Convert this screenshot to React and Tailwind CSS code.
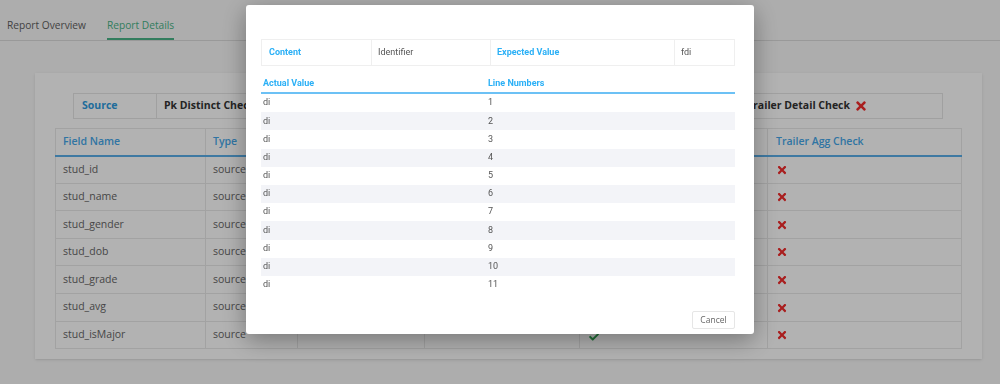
import { FaTimes, FaCheck } from 'react-icons/fa';

const fields = ['stud_id', 'stud_name', 'stud_gender', 'stud_dob', 'stud_grade', 'stud_avg', 'stud_isMajor'];

const summary = [
  { label: 'Pk Distinct Check', ok: true },
  { label: 'Pk Null Check', ok: true },
  { label: 'Header Check', ok: true },
];

const lines = Array.from({ length: 11 }, (_, i) => ({ value: 'di', line: i + 1 }));

const Mark = ({ ok, big }) =>
  ok ? (
    <FaCheck className="inline h-[10px] w-[10px] text-[#2e9e4f]" />
  ) : (
    <FaTimes className={big ? 'inline h-[14px] w-[14px] text-[#f22c2c]' : 'inline h-[12px] w-[12px] text-[#f22c2c]'} />
  );

const App = () => {
  return (
    <div className="min-h-screen bg-[#f8f8f8] font-['Open_Sans',sans-serif]">
      {/* Tabs */}
      <div className="flex h-[41px] items-end border-b border-[#dcdcdc] px-[7px] text-[10.2px]">
        <div className="pb-[7px] text-[#5f5f5f]">Report Overview</div>
        <div className="ml-[21px] border-b-2 border-[#49b487] pb-[5px] text-[#49b487]">Report Details</div>
      </div>

      {/* Card */}
      <div className="ml-[35px] mr-[18px] mt-[32px] bg-white px-[20px] pt-[20px] pb-[10px] shadow-sm">
        <div className="ml-[18px] mr-[19px] flex h-[26px] border border-[#e6e6e6] text-[10.5px] font-bold text-[#333]">
          <div className="flex w-[83px] items-center border-r border-[#e6e6e6] pl-[8px] text-[#2e9bde]">Source</div>
          {summary.map((s) => (
            <div key={s.label} className="flex w-[194px] items-center gap-1 border-r border-[#e6e6e6] pl-[7px]">
              {s.label} <Mark ok={s.ok} />
            </div>
          ))}
          <div className="flex flex-1 items-center gap-1 pl-[8px]">
            Trailer Detail Check <Mark ok={false} big />
          </div>
        </div>

        <table className="mt-[9px] w-[907px] table-fixed border-collapse border border-[#e8e8e8] text-[10.5px]">
          <thead>
            <tr className="h-[27px] border-b-2 border-[#5aaee8] text-left text-[#45a7ea]">
              <th className="w-[150px] border-r border-[#e8e8e8] pl-[7px] font-semibold">Field Name</th>
              <th className="w-[92px] border-r border-[#e8e8e8] pl-[7px] font-semibold">Type</th>
              <th className="w-[127px] border-r border-[#e8e8e8] pl-[7px] font-semibold">Data Type</th>
              <th className="w-[155px] border-r border-[#e8e8e8] pl-[7px] font-semibold">Null Check</th>
              <th className="w-[188px] border-r border-[#e8e8e8] pl-[7px] font-semibold">Length Check</th>
              <th className="pl-[8px] font-semibold">Trailer Agg Check</th>
            </tr>
          </thead>
          <tbody className="text-[#666]">
            {fields.map((f) => (
              <tr key={f} className="h-[27.6px] border-b border-[#e8e8e8]">
                <td className="border-r border-[#e8e8e8] pl-[7px]">{f}</td>
                <td className="border-r border-[#e8e8e8] pl-[7px]">source</td>
                <td className="border-r border-[#e8e8e8] pl-[7px]"></td>
                <td className="border-r border-[#e8e8e8] pl-[7px]"></td>
                <td className="border-r border-[#e8e8e8] pl-[9px] pt-[4px]"><Mark ok /></td>
                <td className="pl-[8px]"><Mark ok={false} /></td>
              </tr>
            ))}
          </tbody>
        </table>
      </div>

      {/* Modal */}
      <div className="fixed inset-0 flex justify-center bg-black/30">
        <div className="mt-[5px] h-[329px] w-[508px] rounded-[3px] bg-white pl-[15px] pr-[19px] pt-[34px] shadow-[0_6px_24px_rgba(0,0,0,0.35)] font-['Roboto',sans-serif] text-[9px]">
          <div className="flex h-[27px] border border-[#efefef] text-[#555]">
            <div className="flex w-[110px] items-center border-r border-[#efefef] pl-[7px] font-bold text-[#2bb0f6]">Content</div>
            <div className="flex w-[119px] items-center border-r border-[#efefef] pl-[6px]">Identifier</div>
            <div className="flex w-[184px] items-center border-r border-[#efefef] pl-[6px] font-bold text-[#2bb0f6]">Expected Value</div>
            <div className="flex flex-1 items-center pl-[6px]">fdi</div>
          </div>

          <div className="mt-[10px]">
            <div className="flex h-[18px] items-center border-b-2 border-[#6cc1f5] font-bold text-[#2bb0f6]">
              <div className="w-[225px] pl-[2px]">Actual Value</div>
              <div className="pl-[2px]">Line Numbers</div>
            </div>
            {lines.map((l) => (
              <div key={l.line} className="flex h-[18.2px] items-center text-[#555] odd:bg-[#f3f4f8]">
                <div className="w-[225px] pl-[2px]">{l.value}</div>
                <div className="pl-[2px]">{l.line}</div>
              </div>
            ))}
          </div>

          <div className="mt-[17px] flex justify-end">
            <button className="h-[18px] w-[43px] rounded-[2px] border border-[#e6e6e6] font-['Open_Sans',sans-serif] text-[8.5px] text-[#666]">
              Cancel
            </button>
          </div>
        </div>
      </div>
    </div>
  );
};

export default App;
